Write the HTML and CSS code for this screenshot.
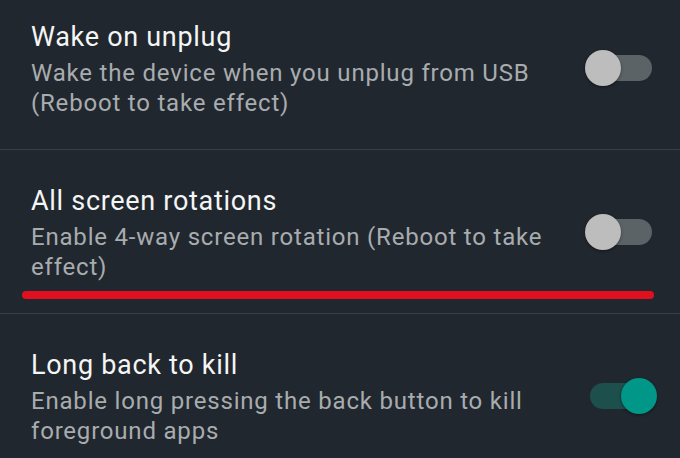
FILE: index.html
```html
<!DOCTYPE html>
<html>
<head>
<meta charset="utf-8">
<link rel="stylesheet" href="styles.css">
</head>
<body>
<div class="list">
  <div class="row">
    <div class="text">
      <div class="title">Wake on unplug</div>
      <div class="summary">Wake the device when you unplug from USB (Reboot to take effect)</div>
    </div>
    <div class="switch"><div class="track"></div><div class="thumb"></div></div>
  </div>
  <div class="row marked">
    <div class="text">
      <div class="title">All screen rotations</div>
      <div class="summary">Enable 4-way screen rotation (Reboot to take effect)</div>
    </div>
    <div class="switch"><div class="track"></div><div class="thumb"></div></div>
    <div class="underline"></div>
  </div>
  <div class="row">
    <div class="text">
      <div class="title">Long back to kill</div>
      <div class="summary">Enable long pressing the back button to kill foreground apps</div>
    </div>
    <div class="switch on"><div class="track"></div><div class="thumb"></div></div>
  </div>
</div>
</body>
</html>
```

FILE: styles.css
```css
html, body {
  margin: 0;
  padding: 0;
  background: #21272e;
  overflow: hidden;
}
body {
  width: 680px;
  height: 458px;
  font-family: Roboto, "Noto Sans", sans-serif;
}
.list {
  margin-top: -14px;
}
.row {
  position: relative;
  box-sizing: border-box;
  height: 164px;
  display: flex;
  align-items: center;
  gap: 24px;
  padding: 0 23px 0 31px;
  border-bottom: 1px solid #393e45;
}
.text {
  flex: 1;
  min-width: 0;
  padding-top: 4px;
}
.title {
  color: #f4f5f5;
  font-size: 27px;
  letter-spacing: 0.7px;
  line-height: 32px;
  margin-bottom: 5px;
}
.summary {
  color: #a8acaf;
  font-size: 24px;
  letter-spacing: 0.8px;
  line-height: 30px;
}
.switch {
  position: relative;
  width: 72px;
  height: 36px;
  flex: none;
  display: flex;
  align-items: center;
}
.track {
  margin: 0 5px;
  flex: 1;
  height: 26px;
  border-radius: 13px;
  background: #5c6366;
}
.thumb {
  position: absolute;
  left: 0;
  top: 0;
  width: 36px;
  height: 36px;
  border-radius: 50%;
  background: #bdbdbd;
  box-shadow: 0 1px 3px rgba(0,0,0,0.45);
}
.switch.on .track {
  background: #1d4f4d;
}
.switch.on .thumb {
  left: auto;
  right: 0;
  background: #009688;
}
.underline {
  position: absolute;
  left: 22px;
  right: 26px;
  bottom: 14px;
  height: 8px;
  border-radius: 4px;
  background: #e0101e;
}
```
